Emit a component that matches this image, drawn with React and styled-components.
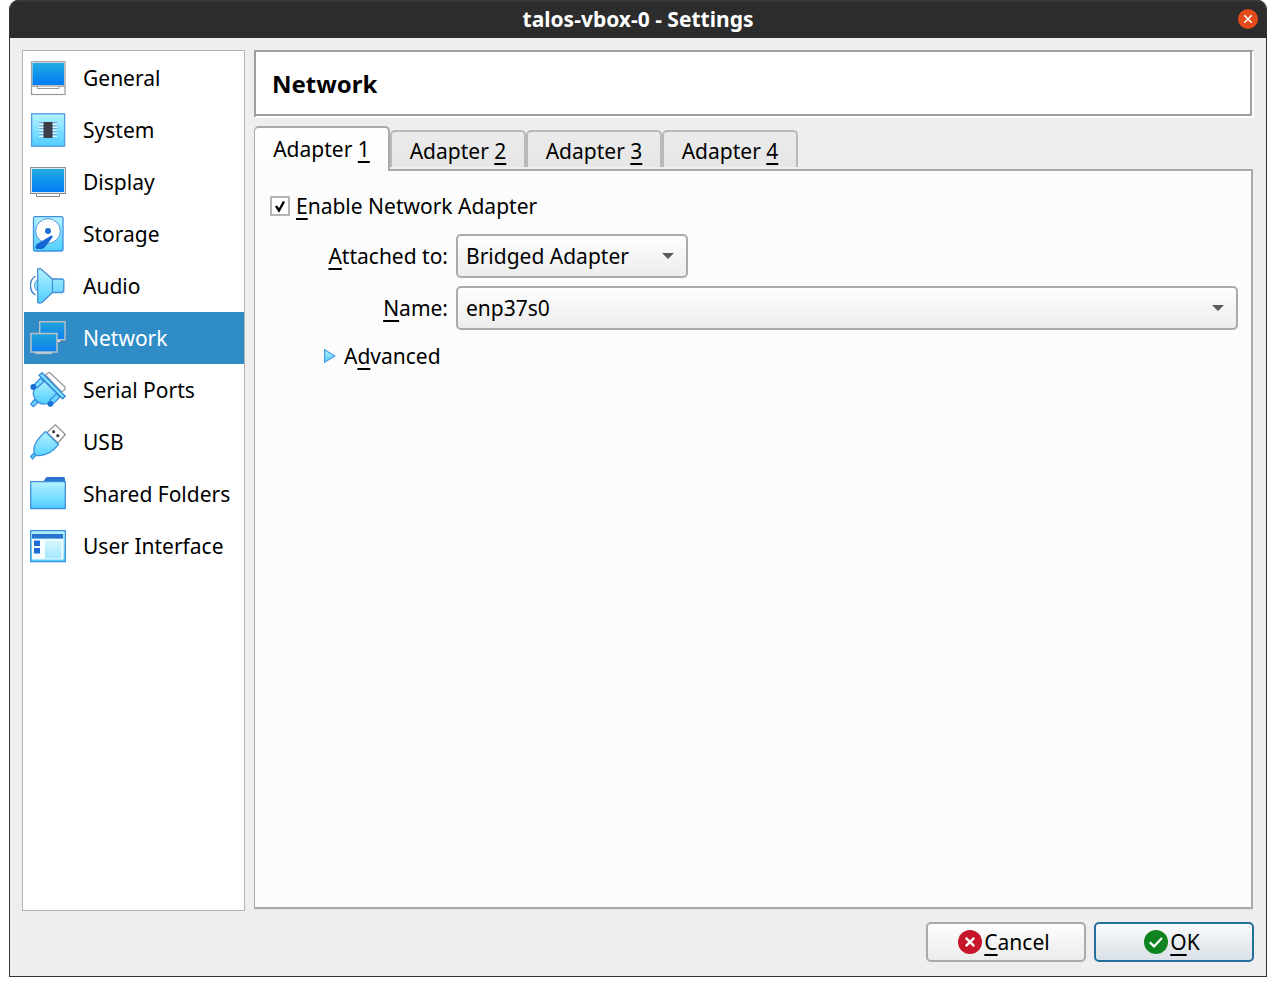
import React, { useState } from "react";
import styled, { createGlobalStyle } from "styled-components";

const GlobalStyle = createGlobalStyle`
  *, *::before, *::after { box-sizing: border-box; }
  body {
    margin: 0;
    background: #fff;
    color: #000;
    font-family: "Noto Sans", "Open Sans", sans-serif;
    font-size: 21px;
    line-height: 28px;
  }
  button, input, select { font: inherit; color: inherit; margin: 0; }
`;

const Page = styled.div`
  min-height: 100vh;
  padding: 0 9px 9px;
  display: flex;
`;

const Window = styled.div`
  flex: 1;
  min-width: 0;
  display: flex;
  flex-direction: column;
  background: #eee;
  border: 1px solid #333;
  border-top: 0;
  border-radius: 9px 9px 0 0;
  overflow: hidden;
`;

const TitleBar = styled.header`
  height: 38px;
  display: grid;
  grid-template-columns: 36px 1fr 36px;
  align-items: center;
  justify-items: center;
  background: #2c2c2c;
  box-shadow: inset 0 2px 0 #383838;
  color: #fff;
`;

const Title = styled.h1`
  grid-column: 2;
  margin: 0;
  font-size: 21px;
  line-height: 28px;
  font-weight: 700;
  white-space: nowrap;
`;

const CloseButton = styled.button`
  width: 20px;
  height: 20px;
  padding: 0;
  border: 0;
  border-radius: 50%;
  background: #e34a19;
  display: flex;
  align-items: center;
  justify-content: center;
`;

const Content = styled.div`
  flex: 1;
  display: flex;
  gap: 9px;
  padding: 12px 12px 0;
`;

const Sidebar = styled.nav`
  width: 223px;
  flex: none;
  padding: 1px 0 1px 1px;
  background: #fff;
  border: 1px solid #b4b4b4;
`;

const SidebarItem = styled.button`
  width: 100%;
  height: 52px;
  padding: 0 0 0 6px;
  display: flex;
  align-items: center;
  gap: 17px;
  border: 0;
  text-align: left;
  white-space: nowrap;
  background: ${(p) => (p.$active ? "#308cc6" : "transparent")};
  color: ${(p) => (p.$active ? "#fff" : "#000")};
  svg {
    flex: none;
    opacity: ${(p) => (p.$active ? "0.8" : "1")};
  }
`;

const Main = styled.main`
  flex: 1;
  min-width: 0;
  display: flex;
  flex-direction: column;
`;

const Heading = styled.div`
  height: 68px;
  padding: 0 16px;
  display: flex;
  align-items: center;
  background: #fff;
  border: 2px solid;
  border-color: #9f9f9f #fff #fff #9f9f9f;
  box-shadow: inset -2px -2px 0 #9f9f9f;
`;

const HeadingText = styled.h2`
  margin: 0;
  font-size: 24px;
  line-height: 32px;
  font-weight: 700;
`;

const TabList = styled.div`
  margin-top: 8px;
  display: flex;
  align-items: flex-end;
  position: relative;
  z-index: 1;
`;

const Tab = styled.button`
  width: 136px;
  height: ${(p) => (p.$active ? "45px" : "37px")};
  margin-bottom: ${(p) => (p.$active ? "-2px" : "2px")};
  padding: ${(p) => (p.$active ? "0 0 2px" : "2px 0 0")};
  border: 2px solid ${(p) => (p.$active ? "#aaa" : "#b9b9b9")};
  border-bottom: 0;
  border-left-width: ${(p) => (p.$active ? "1px" : "2px")};
  border-radius: 5px 5px 0 0;
  background: ${(p) => (p.$active ? "linear-gradient(#fff, #fcfcfc)" : "linear-gradient(#ebebeb, #e6e6e6)")};
  white-space: nowrap;
`;

const Panel = styled.section`
  flex: 1;
  margin: 0 1px 2px 0;
  padding: 20px 13px 14px 15px;
  background: #fcfcfc;
  border: 2px solid #aaa;
  border-left-width: 1px;
  box-shadow: 0 1px 0 #e2e2e2;
`;

const CheckRow = styled.label`
  width: max-content;
  height: 30px;
  display: flex;
  align-items: center;
  gap: 6px;
`;

const CheckBox = styled.input`
  appearance: none;
  width: 20px;
  height: 20px;
  border: 2px solid #b4b4b4;
  border-radius: 1px;
  background: #fff;
  &:checked {
    background: #fff url("data:image/svg+xml,%3Csvg xmlns='http://www.w3.org/2000/svg' viewBox='0 0 16 16'%3E%3Cpath d='M4 8 L7 12.5 L12 3.5' fill='none' stroke='%23000' stroke-width='2.4'/%3E%3C/svg%3E") center / 16px 16px no-repeat;
  }
`;

const Form = styled.div`
  margin-top: 13px;
  display: grid;
  grid-template-columns: 178px 1fr;
  column-gap: 8px;
  row-gap: 8px;
  align-items: center;
`;

const FieldLabel = styled.label`
  text-align: right;
  white-space: nowrap;
`;

const SelectBox = styled.div`
  position: relative;
  width: ${(p) => p.$width || "100%"};
  height: 44px;
  svg {
    position: absolute;
    right: 14px;
    top: 19px;
    pointer-events: none;
  }
`;

const Select = styled.select`
  appearance: none;
  width: 100%;
  height: 100%;
  padding: 0 36px 0 8px;
  border: 2px solid #aaa;
  border-radius: 5px;
  background: linear-gradient(#fefefe, #ececec);
`;

const Disclosure = styled.button`
  margin: 12px 0 0 54px;
  padding: 0;
  border: 0;
  background: none;
  display: flex;
  align-items: center;
  gap: 8px;
`;

const Footer = styled.footer`
  display: flex;
  justify-content: flex-end;
  gap: 8px;
  padding: 11px 12px 14px;
`;

const ActionButton = styled.button`
  width: 160px;
  height: 40px;
  padding: 0 4px 0 0;
  display: flex;
  align-items: center;
  justify-content: center;
  gap: 2px;
  border: 2px solid ${(p) => (p.$primary ? "#256f9f" : "#aaa")};
  border-radius: 5px;
  background: ${(p) => (p.$primary ? "linear-gradient(#fafbfc, #d9e0e7)" : "linear-gradient(#fefefe, #ececec)")};
`;

const Mnemonic = styled.span`
  text-decoration: underline;
  text-decoration-thickness: 2px;
  text-underline-offset: 4px;
  text-decoration-skip-ink: none;
`;

const Icon = ({ children }) => (
  <svg width="36" height="36" viewBox="0 0 36 36" aria-hidden="true">
    {children}
  </svg>
);

const Defs = styled.svg`
  position: absolute;
`;

const Gradients = () => (
  <Defs width="0" height="0" aria-hidden="true">
    <defs>
      <linearGradient id="screen" x1="0" y1="0" x2="0" y2="1">
        <stop offset="0" stopColor="#22abdf" />
        <stop offset="1" stopColor="#007cf8" />
      </linearGradient>
      <linearGradient id="light" x1="0" y1="0" x2="0" y2="1">
        <stop offset="0" stopColor="#b4f2ff" />
        <stop offset="1" stopColor="#4fceff" />
      </linearGradient>
    </defs>
  </Defs>
);

const GeneralIcon = () => (
  <Icon>
    <rect x="1.5" y="26" width="33.5" height="8.5" fill="#fff" stroke="#999" strokeWidth="1.2" />
    <path d="M7.5 26v2.500h21.500V26" fill="#fff" stroke="#999" />
    <rect x="1.5" y="1.7" width="33.5" height="24.3" fill="#dcecf5" stroke="#a5a5a5" strokeWidth="1.3" />
    <rect x="2.5" y="3" width="31.5" height="22" fill="url(#screen)" />
  </Icon>
);

const SystemIcon = () => (
  <Icon>
    <rect x="1.6" y="1.8" width="33" height="32.4" fill="url(#light)" stroke="#519be3" strokeWidth="1.3" />
    <path d="M9 11h18M9 14h18M9 17h18M9 20h18M9 23h18" stroke="#3b87ca" />
    <path d="M9 12.200h18M9 15.200h18M9 18.200h18M9 21.200h18M9 24.200h18" stroke="#fff" strokeWidth="1.3" />
    <rect x="13.5" y="10" width="9" height="16" fill="#3a3d48" />
  </Icon>
);

const DisplayIcon = () => (
  <Icon>
    <path d="M6.500 28v4.500h23V28" fill="#fff" stroke="#888" />
    <rect x="0.5" y="3.5" width="35" height="26" fill="#d7e8f2" stroke="#8d8d8d" />
    <rect x="2" y="5" width="32" height="23" fill="url(#screen)" />
  </Icon>
);

const StorageIcon = () => (
  <Icon>
    <rect x="3.5" y="0.7" width="29.5" height="34.3" rx="1.5" fill="url(#light)" stroke="#3d91e2" strokeWidth="1.3" />
    <circle cx="18" cy="15" r="12.3" fill="#fff" stroke="#3f8dd8" strokeWidth="0.9" />
    <path d="M20.500 20c2-1 3 0 1.500 2l-7 9c-2 2.600-4 2-8 2-2 0-2-3 0-5z" fill="#1567d3" />
    <circle cx="18" cy="15" r="3" fill="#1d6fd5" />
  </Icon>
);

const AudioIcon = () => (
  <Icon>
    <path d="M5.500 8C-1.200 12-1.200 23 5.500 27" fill="none" stroke="#3b82ce" strokeWidth="1.4" />
    <path d="M7.500 12C3.500 14 3.500 21 7.500 23" fill="#8ee0fa" stroke="#4c9de0" />
    <path d="M7.700 1Q9.500 0 11.500 1.500L22.500 11H32.500L33.800 12.300V23L32.500 24.500H22.500L12 34.500Q9.500 35.700 7.700 34.500Z" fill="url(#light)" stroke="#458ed2" strokeWidth="1.3" />
    <path d="M22.500 11v13.500" stroke="#458ed2" strokeWidth="1.2" />
  </Icon>
);

const NetworkIcon = () => (
  <Icon>
    <path d="M27 19v3.500h3.500v-2h4v-2" fill="#fff" stroke="#667" strokeWidth="0.8" />
    <rect x="9.7" y="1.7" width="25.3" height="18" fill="url(#screen)" stroke="#ddcfc6" strokeWidth="1.4" />
    <path d="M5 31v3h17v-3" fill="#fff" stroke="#99a" strokeWidth="0.8" />
    <rect x="1" y="13.5" width="26" height="18.5" fill="url(#screen)" stroke="#ddcfc6" strokeWidth="1.5" />
  </Icon>
);

const SerialIcon = () => (
  <Icon>
    <path d="M15.500 3L18.500 .8Q19.500 .3 20.500 1.200L35 15V17.500L31.500 20Z" fill="#fff" stroke="#969696" strokeWidth="1.2" />
    <path d="M4.500 27.500L.7 32L3.300 34.600L8 30.500Z" fill="#6bd6ff" stroke="#348bdd" strokeWidth="1.2" />
    <path d="M12 7L5 15Q1 22 6 28Q12 35 21 30L30 24Z" fill="url(#light)" stroke="#3d94df" strokeWidth="1.3" />
    <path d="M4 13L10.500 6L14 9.500L7 16Z" fill="#7bdcff" stroke="#348bdd" strokeWidth="1.2" />
    <path d="M20 28L26.500 21.500L30 25L23 32Z" fill="#6bd6ff" stroke="#348bdd" strokeWidth="1.2" />
    <circle cx="3.3" cy="15" r="2.9" fill="#1a6fd6" />
    <circle cx="20.3" cy="31.8" r="2.9" fill="#1a6fd6" />
    <path d="M9 3.300L12 .8L35.200 24.200L32.500 26.800Z" fill="#7edfff" stroke="#3186d8" strokeWidth="1.3" strokeLinejoin="round" />
  </Icon>
);

const UsbIcon = () => (
  <Icon>
    <path d="M17 8.500L25.500 .8L35.300 10.500L28 19Z" fill="#fff" stroke="#929292" strokeWidth="1.3" />
    <circle cx="23.6" cy="7.7" r="1.6" fill="#444" />
    <circle cx="27.8" cy="11.7" r="1.6" fill="#444" />
    <path d="M15.500 7.500L28.500 20.500Q20 31 10 31.500L5.500 31.500L2.500 35L.7 32.500L4 29L4 24Q5 17 15.500 7.500Z" fill="url(#light)" stroke="#3d94df" strokeWidth="1.3" />
    <path d="M4 29l2 2.500" stroke="#3d94df" strokeWidth="1.3" />
  </Icon>
);

const FolderIcon = () => (
  <Icon>
    <path d="M13 6L16 1.500Q16.500 1 17.500 1H33.500Q35 1 35 2.500V8H12Z" fill="#2b73ce" />
    <path d="M.7 5.700H35.300V32.500H.7Z" fill="url(#light)" stroke="#3d91db" strokeWidth="1.3" />
  </Icon>
);

const InterfaceIcon = () => (
  <Icon>
    <rect x="0.6" y="2.6" width="34.8" height="31" fill="url(#light)" stroke="#3d91e0" strokeWidth="1.3" />
    <rect x="2" y="11" width="31.5" height="20.5" fill="#f8feff" />
    <rect x="2" y="6" width="31" height="4.5" fill="#2b73ce" />
    <rect x="4" y="12.5" width="6" height="5.5" fill="#1c6ed5" />
    <rect x="4" y="20" width="6" height="5.5" fill="#1c6ed5" />
    <rect x="15" y="12.5" width="16.5" height="18" fill="url(#light)" opacity="0.5" />
  </Icon>
);

const SelectArrow = () => (
  <svg width="12" height="6" viewBox="0 0 12 6" aria-hidden="true">
    <path d="M0 0h12l-6 6z" fill="#5b5b5b" />
  </svg>
);

const sections = [
  ["General", GeneralIcon],
  ["System", SystemIcon],
  ["Display", DisplayIcon],
  ["Storage", StorageIcon],
  ["Audio", AudioIcon],
  ["Network", NetworkIcon],
  ["Serial Ports", SerialIcon],
  ["USB", UsbIcon],
  ["Shared Folders", FolderIcon],
  ["User Interface", InterfaceIcon],
];

export default function App() {
  const [section, setSection] = useState("Network");
  const [adapter, setAdapter] = useState(1);

  return (
    <Page>
      <GlobalStyle />
      <Gradients />
      <Window>
        <TitleBar>
          <Title>talos-vbox-0 - Settings</Title>
          <CloseButton aria-label="Close">
            <svg width="20" height="20" viewBox="0 0 20 20" aria-hidden="true">
              <path d="M6.300 6.300l7.400 7.400M13.700 6.300l-7.400 7.400" stroke="#fff" strokeWidth="1.6" />
            </svg>
          </CloseButton>
        </TitleBar>
        <Content>
          <Sidebar>
            {sections.map(([name, Glyph]) => (
              <SidebarItem key={name} $active={name === section} onClick={() => setSection(name)}>
                <Glyph />
                {name}
              </SidebarItem>
            ))}
          </Sidebar>
          <Main>
            <Heading>
              <HeadingText>{section}</HeadingText>
            </Heading>
            <TabList role="tablist">
              {[1, 2, 3, 4].map((n) => (
                <Tab
                  key={n}
                  role="tab"
                  aria-selected={n === adapter}
                  $active={n === adapter}
                  onClick={() => setAdapter(n)}
                >
                  Adapter <Mnemonic>{n}</Mnemonic>
                </Tab>
              ))}
            </TabList>
            <Panel>
              <CheckRow>
                <CheckBox type="checkbox" defaultChecked />
                <span><Mnemonic>E</Mnemonic>nable Network Adapter</span>
              </CheckRow>
              <Form>
                <FieldLabel htmlFor="attached"><Mnemonic>A</Mnemonic>ttached to:</FieldLabel>
                <SelectBox $width="232px">
                  <Select id="attached" defaultValue="Bridged Adapter">
                    <option>Bridged Adapter</option>
                  </Select>
                  <SelectArrow />
                </SelectBox>
                <FieldLabel htmlFor="name"><Mnemonic>N</Mnemonic>ame:</FieldLabel>
                <SelectBox>
                  <Select id="name" defaultValue="enp37s0">
                    <option>enp37s0</option>
                  </Select>
                  <SelectArrow />
                </SelectBox>
              </Form>
              <Disclosure aria-expanded="false">
                <svg width="12" height="14" viewBox="0 0 12 14" aria-hidden="true">
                  <path d="M.6 .8L10.800 7L.6 13.200Z" fill="url(#light)" stroke="#4a9fe6" strokeWidth="1.2" />
                </svg>
                <span>A<Mnemonic>d</Mnemonic>vanced</span>
              </Disclosure>
            </Panel>
          </Main>
        </Content>
        <Footer>
          <ActionButton>
            <svg width="24" height="24" viewBox="0 0 24 24" aria-hidden="true">
              <circle cx="12" cy="12" r="12" fill="#c7162b" />
              <path d="M7.800 7.800l8.400 8.400M16.200 7.800l-8.400 8.400" stroke="#fff" strokeWidth="2.4" />
            </svg>
            <span><Mnemonic>C</Mnemonic>ancel</span>
          </ActionButton>
          <ActionButton $primary>
            <svg width="24" height="24" viewBox="0 0 24 24" aria-hidden="true">
              <circle cx="12" cy="12" r="12" fill="#0e8420" />
              <path d="M5.800 12.200l4.200 4.200 8-8.400" fill="none" stroke="#fff" strokeWidth="2.2" />
            </svg>
            <span><Mnemonic>O</Mnemonic>K</span>
          </ActionButton>
        </Footer>
      </Window>
    </Page>
  );
}
